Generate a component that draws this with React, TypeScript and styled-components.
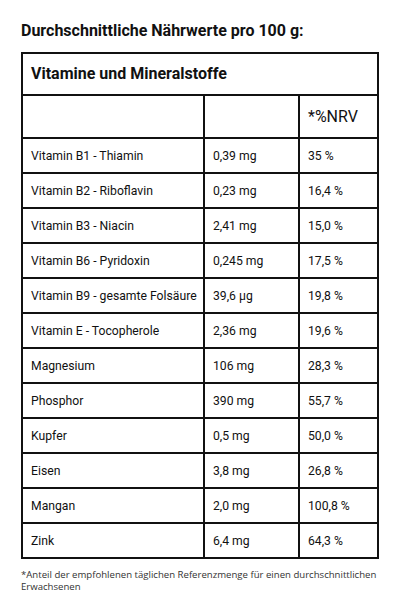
import * as React from 'react';
import styled, { createGlobalStyle } from 'styled-components';

interface INutrient {
  name: string;
  amount: string;
  nrv: string;
}

const nutrients: INutrient[] = [
  { name: 'Vitamin B1 - Thiamin', amount: '0,39 mg', nrv: '35 %' },
  { name: 'Vitamin B2 - Riboflavin', amount: '0,23 mg', nrv: '16,4 %' },
  { name: 'Vitamin B3 - Niacin', amount: '2,41 mg', nrv: '15,0 %' },
  { name: 'Vitamin B6 - Pyridoxin', amount: '0,245 mg', nrv: '17,5 %' },
  { name: 'Vitamin B9 - gesamte Folsäure', amount: '39,6 µg', nrv: '19,8 %' },
  { name: 'Vitamin E - Tocopherole', amount: '2,36 mg', nrv: '19,6 %' },
  { name: 'Magnesium', amount: '106 mg', nrv: '28,3 %' },
  { name: 'Phosphor', amount: '390 mg', nrv: '55,7 %' },
  { name: 'Kupfer', amount: '0,5 mg', nrv: '50,0 %' },
  { name: 'Eisen', amount: '3,8 mg', nrv: '26,8 %' },
  { name: 'Mangan', amount: '2,0 mg', nrv: '100,8 %' },
  { name: 'Zink', amount: '6,4 mg', nrv: '64,3 %' },
];

const GlobalStyle = createGlobalStyle`
  body {
    margin: 0;
    background: #fff;
    color: #111;
    font-family: Roboto, "Liberation Sans", sans-serif;
  }
`;

const Page = styled.div`
  padding: 18px 21px 0 21px;
`;

const Title = styled.h2`
  font-size: 16px;
  font-weight: 700;
  line-height: 26px;
  margin: 0 0 8px 0;
`;

const Table = styled.table`
  width: 358px;
  border-collapse: collapse;
  table-layout: fixed;
  border: 2px solid #111;
`;

const Cell = styled.td<{ $height?: number; $size?: number }>`
  border: 2px solid #111;
  padding: 0 8px;
  height: ${(p) => p.$height || 33}px;
  font-size: ${(p) => p.$size || 12.2}px;
  line-height: 16px;
  vertical-align: middle;
  white-space: nowrap;
`;

const SectionCell = styled(Cell)`
  font-weight: 700;
`;

const Footnote = styled.p`
  font-family: "Open Sans", sans-serif;
  font-size: 9.6px;
  line-height: 12px;
  color: #333;
  margin: 10px 0 0 0;
`;

export default function App() {
  return (
    <Page>
      <GlobalStyle />
      <Title>Durchschnittliche Nährwerte pro 100 g:</Title>
      <Table>
        <colgroup>
          <col style={{ width: 182 }} />
          <col style={{ width: 95 }} />
          <col />
        </colgroup>
        <tbody>
          <tr>
            <SectionCell colSpan={3} $height={40} $size={16}>
              Vitamine und Mineralstoffe
            </SectionCell>
          </tr>
          <tr>
            <Cell $height={41} />
            <Cell $height={41} />
            <Cell $height={41} $size={16}>
              *%NRV
            </Cell>
          </tr>
          {nutrients.map((n) => (
            <tr key={n.name}>
              <Cell>{n.name}</Cell>
              <Cell>{n.amount}</Cell>
              <Cell>{n.nrv}</Cell>
            </tr>
          ))}
        </tbody>
      </Table>
      <Footnote>
        *Anteil der empfohlenen täglichen Referenzmenge für einen durchschnittlichen Erwachsenen
      </Footnote>
    </Page>
  );
}
